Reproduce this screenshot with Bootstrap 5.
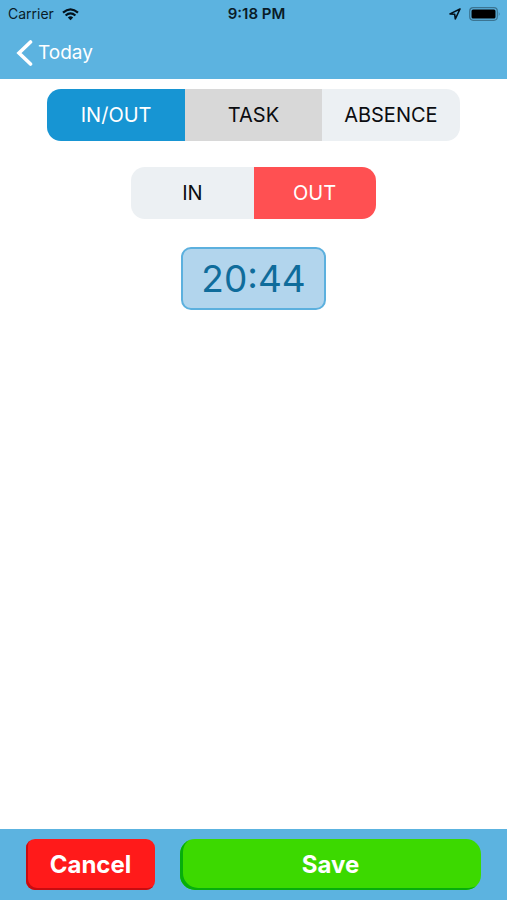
<!DOCTYPE html>
<html lang="en">
<head>
<meta charset="utf-8">
<meta name="viewport" content="width=device-width, initial-scale=1">
<title>Time entry</title>
<link href="https://cdn.jsdelivr.net/npm/bootstrap@5.3.0/dist/css/bootstrap.min.css" rel="stylesheet">
<style>
body { font-family: Inter, "Liberation Sans", sans-serif; color: #0b1116; }
.bar { background: #5cb3e0; }
.status-bar { height: 28px; padding: 0 6px 0 8px; font-size: 14px; line-height: 28px; color: #0a1c28; }
.status-bar .clock { padding-left: 4px; font-weight: 600; font-size: 15px; }
.back-row { height: 51px; padding: 0 16px 2px; }
.back-link { font-size: 19px; line-height: 24px; }
.entry-form { padding-top: 10px; gap: 26px; }
.segments .btn { --bs-btn-border-width: 0; --bs-btn-bg: #ecf0f3; --bs-btn-color: #0b0d10; --bs-btn-hover-bg: #d8d8d8;
  --bs-btn-active-color: #fff; --bs-btn-border-radius: 14px; flex: 1 1 0; margin: 0 !important; padding: 0; font-size: 20px; line-height: 52px; }
.segments .seg-pressed { --bs-btn-bg: #d8d8d8; }
.seg-kind { width: 81.3%; }
.seg-kind .btn { --bs-btn-active-bg: #1795d3; }
.seg-way { width: 48.2%; }
.seg-way .btn { --bs-btn-active-bg: #ff5052; }
.time-btn { --bs-btn-bg: #b2d5ed; --bs-btn-color: #0f6c9b; --bs-btn-border-color: #5cb0de; --bs-btn-border-width: 2px; --bs-btn-border-radius: 10px;
  --bs-btn-hover-bg: #a5cde9; --bs-btn-hover-color: #0f6c9b; padding: 0 18px; margin-top: 2px; font-size: 37px; line-height: 59px; }
.action-bar { padding: 10px 26px; gap: 25px; }
.action-bar .btn { --bs-btn-border-width: 0; --bs-btn-color: #fff; --bs-btn-hover-color: #fff; padding: 0; font-size: 24px; font-weight: 700; line-height: 51px; }
.action-bar .btn-stop { --bs-btn-bg: #ff1a1a; --bs-btn-hover-bg: #f01010; --bs-btn-border-radius: 9px; flex: 0 0 129px; box-shadow: inset 2px -2px 0 #c80c10; }
.action-bar .btn-go { --bs-btn-bg: #3cd900; --bs-btn-hover-bg: #35c800; --bs-btn-border-radius: 15px; box-shadow: inset 3px -2px 0 #06ae0c; }
</style>
<script src="https://cdn.jsdelivr.net/npm/bootstrap@5.3.0/dist/js/bootstrap.bundle.min.js" defer></script>
</head>
<body class="d-flex flex-column min-vh-100">
<header class="bar">
  <div class="status-bar row g-0 align-items-center">
    <div class="col d-flex align-items-center gap-2">
      <span>Carrier</span>
      <svg width="17" height="13" viewBox="0 0 17 13" aria-hidden="true" fill="none" stroke="#04121c" stroke-width="2.2"><path d="M1 4.700Q8.500-1.900 16 4.700M3.600 7.500Q8.500 3.200 13.400 7.500"/><path d="M5.800 9.500Q8.500 7.200 11.200 9.500L8.500 12.300Z" fill="#04121c" stroke="none"/></svg>
    </div>
    <div class="col-auto clock">9:18 PM</div>
    <div class="col d-flex align-items-center justify-content-end gap-2">
      <svg width="12" height="12" viewBox="0 0 12 12" aria-hidden="true"><path d="M11 1 1 5.900 5.700 6.300 6.300 11Z" fill="none" stroke="#04121c" stroke-width="1.600" stroke-linejoin="round"/></svg>
      <svg width="32" height="14" viewBox="0 0 32 14" aria-hidden="true"><rect x=".7" y=".7" width="27.600" height="12.600" rx="3.500" fill="none" stroke="#3b7492" stroke-width="1.200"/><rect x="2.500" y="2.500" width="24" height="9" rx="1.500"/><path d="M29.800 4.800q1.700 2.200 0 4.400Z" fill="#3b7492"/></svg>
    </div>
  </div>
  <nav class="back-row d-flex align-items-center">
    <a href="#" class="back-link d-flex align-items-center text-white text-decoration-none">
      <svg class="me-1" width="18" height="26" viewBox="0 0 18 26" aria-hidden="true"><path d="M14.500 2 3 13 14.500 24" fill="none" stroke="#fff" stroke-width="3.600" stroke-linecap="round"/></svg>
      Today
    </a>
  </nav>
</header>
<main class="entry-form flex-grow-1 d-flex flex-column align-items-center">
  <div class="segments seg-kind btn-group d-flex" role="group" aria-label="Entry type">
    <input class="btn-check" type="radio" name="kind" id="kind-inout" checked><label class="btn" for="kind-inout">IN/OUT</label>
    <input class="btn-check" type="radio" name="kind" id="kind-task"><label class="btn seg-pressed" for="kind-task">TASK</label>
    <input class="btn-check" type="radio" name="kind" id="kind-absence"><label class="btn" for="kind-absence">ABSENCE</label>
  </div>
  <div class="segments seg-way btn-group d-flex" role="group" aria-label="Direction">
    <input class="btn-check" type="radio" name="way" id="way-in"><label class="btn" for="way-in">IN</label>
    <input class="btn-check" type="radio" name="way" id="way-out" checked><label class="btn" for="way-out">OUT</label>
  </div>
  <button type="button" class="time-btn btn">20:44</button>
</main>
<footer class="action-bar bar d-flex">
  <button type="button" class="btn btn-stop">Cancel</button>
  <button type="button" class="btn btn-go flex-grow-1">Save</button>
</footer>
</body>
</html>
